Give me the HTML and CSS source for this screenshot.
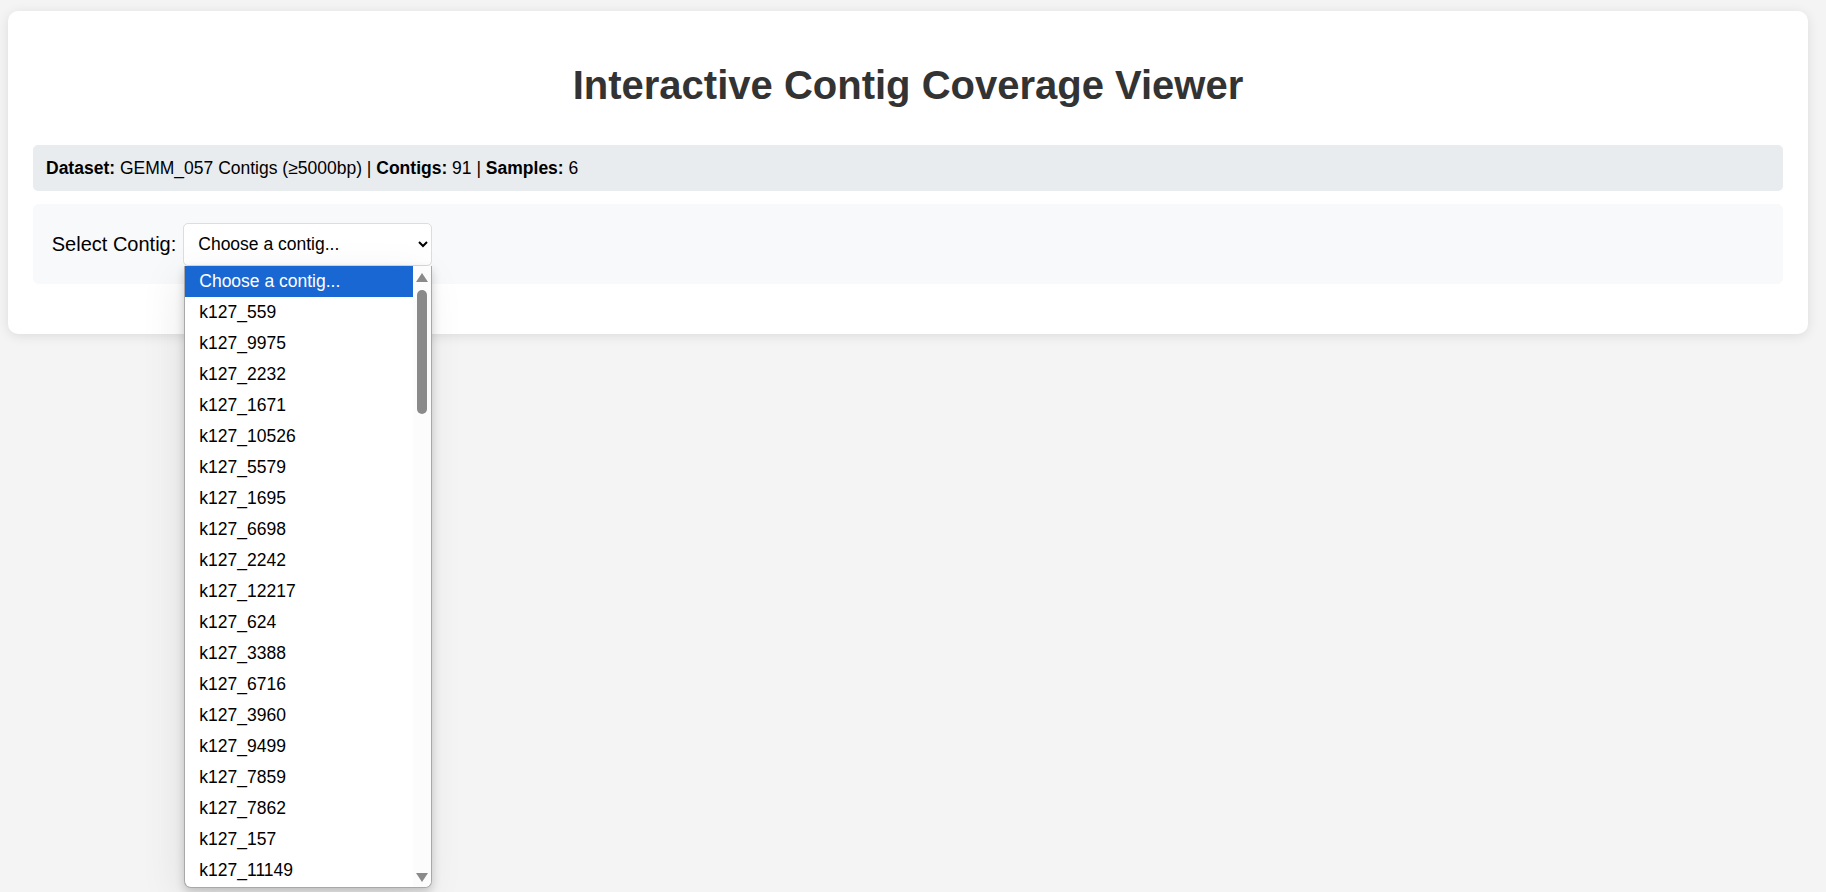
FILE: index.html
```html
<!DOCTYPE html>
<html lang="en">
<head>
<meta charset="utf-8">
<title>Interactive Contig Coverage Viewer</title>
<link rel="stylesheet" href="styles.css">
</head>
<body>
<div class="container">
  <h1>Interactive Contig Coverage Viewer</h1>
  <div class="info"><strong>Dataset:</strong> GEMM_057 Contigs (≥5000bp) | <strong>Contigs:</strong> 91 | <strong>Samples:</strong> 6</div>
  <div class="controls">
    <label class="label" for="contig">Select Contig:</label>
    <div class="select-wrap">
      <select id="contig" class="select">
        <option>Choose a contig...</option>
      </select>
      <div class="popup">
        <ul class="options">
          <li class="option selected">Choose a contig...</li>
          <li class="option">k127_559</li>
          <li class="option">k127_9975</li>
          <li class="option">k127_2232</li>
          <li class="option">k127_1671</li>
          <li class="option">k127_10526</li>
          <li class="option">k127_5579</li>
          <li class="option">k127_1695</li>
          <li class="option">k127_6698</li>
          <li class="option">k127_2242</li>
          <li class="option">k127_12217</li>
          <li class="option">k127_624</li>
          <li class="option">k127_3388</li>
          <li class="option">k127_6716</li>
          <li class="option">k127_3960</li>
          <li class="option">k127_9499</li>
          <li class="option">k127_7859</li>
          <li class="option">k127_7862</li>
          <li class="option">k127_157</li>
          <li class="option">k127_11149</li>
        </ul>
        <div class="scrollbar">
          <svg class="arrow" width="12" height="9" viewBox="0 0 12 9"><polygon points="6,0 12,9 0,9" fill="#8a8a8a"/></svg>
          <div class="thumb"></div>
          <div class="track-rest"></div>
          <svg class="arrow" width="12" height="9" viewBox="0 0 12 9"><polygon points="0,0 12,0 6,9" fill="#8a8a8a"/></svg>
        </div>
      </div>
    </div>
  </div>
</div>
</body>
</html>
```

FILE: styles.css
```css
html {
  margin: 0;
  padding: 0;
  height: 100%;
}

body {
  margin: 0;
  min-height: 100%;
  box-sizing: border-box;
  background: #f4f4f4;
  font-family: "Liberation Sans", Arial, sans-serif;
  padding: 11px 8px;
  color: #000;
}

.container {
  width: 1800px;
  box-sizing: border-box;
  background: #fff;
  border-radius: 10px;
  box-shadow: 0 2px 12px rgba(0, 0, 0, 0.1);
  padding: 25px;
}

h1 {
  font-size: 40px;
  font-weight: bold;
  color: #333;
  text-align: center;
  margin: 26.8px 0 37.5px;
}

.info {
  background: #e9ecef;
  border-radius: 5px;
  padding: 12.5px 13px;
  font-size: 17.5px;
  margin-bottom: 12.5px;
}

.controls {
  background: #f8f9fa;
  border-radius: 6px;
  padding: 18.75px;
  display: flex;
  align-items: center;
  margin-bottom: 25px;
}

.label {
  font-size: 20px;
  margin-right: 7px;
}

.select-wrap {
  position: relative;
}

.select {
  display: block;
  width: 249px;
  height: 43px;
  box-sizing: border-box;
  font-family: "Liberation Sans", Arial, sans-serif;
  font-size: 17.5px;
  padding: 0 10px;
  border: 1px solid #ddd;
  border-radius: 5px;
  background: #fff;
  color: #000;
}

.popup {
  position: absolute;
  top: 100%;
  left: 1px;
  width: 248px;
  height: 622px;
  box-sizing: border-box;
  background: #fff;
  border: 1px solid #a8a8a8;
  border-top: none;
  border-radius: 0 0 7px 7px;
  box-shadow: 0 4px 10px rgba(0, 0, 0, 0.18), -6px 10px 40px rgba(0, 0, 0, 0.08);
  display: flex;
  overflow: hidden;
  z-index: 10;
}

.options {
  list-style: none;
  margin: 0;
  padding: 0;
  flex: 1;
  overflow: hidden;
}

.option {
  height: 31px;
  line-height: 31px;
  padding-left: 14px;
  font-size: 17.5px;
  white-space: nowrap;
}

.option.selected {
  background: #1967d2;
  color: #fff;
}

.scrollbar {
  width: 18px;
  background: #fcfcfc;
  display: flex;
  flex-direction: column;
  align-items: center;
  padding: 7px 0 5px;
  box-sizing: border-box;
}

.arrow {
  display: block;
  flex: none;
}

.thumb {
  width: 10px;
  height: 124px;
  margin-top: 8px;
  border-radius: 5px;
  background: #8a8a8a;
  flex: none;
}

.track-rest {
  flex: 1;
}
```
